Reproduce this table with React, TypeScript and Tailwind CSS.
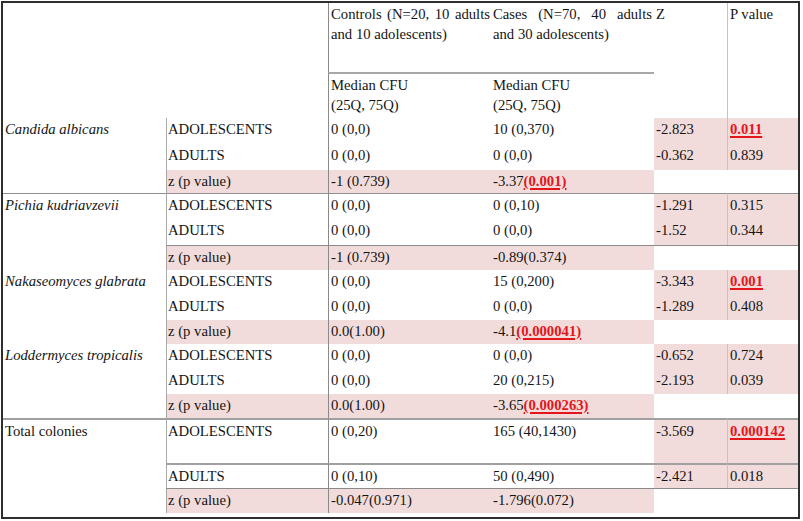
import React from "react";

// Table of yeast colony counts: controls vs cases, by age group

function Cell({ className = "", children }: { className?: string; children?: React.ReactNode }) {
  return <div className={"pt-[1px] " + className}>{children}</div>;
}

function Sig({ children }: { children: React.ReactNode }) {
  return (
    <span className="font-bold text-[#e3161b] underline decoration-[1.5px] underline-offset-[2px]">
      {children}
    </span>
  );
}

export default function App() {
  return (
    <div className="bg-white w-[803px] h-[521px] pt-[1px] pl-[1px]">
      <div className="w-[799px] h-[518px] border-2 border-[#2e2e2e] font-['Liberation_Serif',serif] text-[14.7px] leading-[20px] text-[#141414]">
        <div className="grid grid-cols-[163px_162px_162px_164px_73px_71px] grid-rows-[69px_46px_26px_26px_23px_26px_26px_25px_25px_25px_24px_25px_25px_24px_45px_25px_25px]">
          {/* header */}
          <Cell className="col-span-2 row-span-2" />
          <Cell className="border-l border-[#8a8a8a] pl-[2px] text-justify">
            Controls (N=20, 10 adults and 10 adolescents)
          </Cell>
          <Cell className="pl-[3px] pr-[2px] text-justify">Cases (N=70, 40 adults and 30 adolescents)</Cell>
          <Cell className="row-span-2 pl-[2px]">Z</Cell>
          <Cell className="row-span-2 border-l border-[#c4c4c4] pl-[2px]">P value</Cell>
          <Cell className="border-l border-[#8a8a8a] border-t-2 border-t-[#a8a8a8] pl-[2px] pt-[0px]">
            Median CFU
            <br />
            (25Q, 75Q)
          </Cell>
          <Cell className="border-t-2 border-t-[#a8a8a8] pl-[3px] pt-[0px]">
            Median CFU
            <br />
            (25Q, 75Q)
          </Cell>

          {/* Candida albicans */}
          <Cell className="row-span-3 pl-[2px] italic">Candida albicans</Cell>
          <Cell className="border-l border-[#a8a8a8] pl-[1px]">ADOLESCENTS</Cell>
          <Cell className="border-l border-[#8a8a8a] pl-[2px]">0 (0,0)</Cell>
          <Cell className="pl-[3px]">10 (0,370)</Cell>
          <Cell className="bg-[#f2dcdb] pl-[2px]">-2.823</Cell>
          <Cell className="bg-[#f2dcdb] border-l border-[#c4c4c4] pl-[2px]">
            <Sig>0.011</Sig>
          </Cell>
          <Cell className="border-l border-[#a8a8a8] pl-[1px]">ADULTS</Cell>
          <Cell className="border-l border-[#8a8a8a] pl-[2px]">0 (0,0)</Cell>
          <Cell className="pl-[3px]">0 (0,0)</Cell>
          <Cell className="bg-[#f2dcdb] pl-[2px]">-0.362</Cell>
          <Cell className="bg-[#f2dcdb] border-l border-[#c4c4c4] pl-[2px]">0.839</Cell>
          <Cell className="bg-[#f2dcdb] border-l border-[#a8a8a8] pl-[1px]">z (p value)</Cell>
          <Cell className="bg-[#f2dcdb] border-l border-[#8a8a8a] pl-[2px]">-1 (0.739)</Cell>
          <Cell className="bg-[#f2dcdb] pl-[3px]">
            -3.37<Sig>(0.001)</Sig>
          </Cell>
          <Cell className="col-span-2" />

          {/* Pichia kudriavzevii */}
          <Cell className="row-span-3 border-t border-t-[#909090] pl-[2px] pt-[0px] italic">Pichia kudriavzevii</Cell>
          <Cell className="border-t border-t-[#909090] border-l border-[#a8a8a8] pl-[1px] pt-[0px]">ADOLESCENTS</Cell>
          <Cell className="border-t border-t-[#909090] border-l border-[#8a8a8a] pl-[2px] pt-[0px]">0 (0,0)</Cell>
          <Cell className="border-t border-t-[#909090] pl-[3px] pt-[0px]">0 (0,10)</Cell>
          <Cell className="border-t border-t-[#909090] bg-[#f2dcdb] pl-[2px] pt-[0px]">-1.291</Cell>
          <Cell className="border-t border-t-[#909090] bg-[#f2dcdb] border-l border-[#c4c4c4] pl-[2px] pt-[0px]">0.315</Cell>
          <Cell className="border-l border-[#a8a8a8] pl-[1px]">ADULTS</Cell>
          <Cell className="border-l border-[#8a8a8a] pl-[2px]">0 (0,0)</Cell>
          <Cell className="pl-[3px]">0 (0,0)</Cell>
          <Cell className="bg-[#f2dcdb] pl-[2px]">-1.52</Cell>
          <Cell className="bg-[#f2dcdb] border-l border-[#c4c4c4] pl-[2px]">0.344</Cell>
          <Cell className="border-t border-t-[#8a8a8a] bg-[#f2dcdb] border-l border-[#a8a8a8] pl-[1px] pt-[0px]">z (p value)</Cell>
          <Cell className="border-t border-t-[#8a8a8a] bg-[#f2dcdb] border-l border-[#8a8a8a] pl-[2px] pt-[0px]">-1 (0.739)</Cell>
          <Cell className="border-t border-t-[#8a8a8a] bg-[#f2dcdb] pl-[3px] pt-[0px]">-0.89(0.374)</Cell>
          <Cell className="col-span-2 border-t border-t-[#8a8a8a]" />

          {/* Nakaseomyces glabrata */}
          <Cell className="row-span-3 pl-[2px] italic">Nakaseomyces glabrata</Cell>
          <Cell className="border-l border-[#a8a8a8] pl-[1px]">ADOLESCENTS</Cell>
          <Cell className="border-l border-[#8a8a8a] pl-[2px]">0 (0,0)</Cell>
          <Cell className="pl-[3px]">15 (0,200)</Cell>
          <Cell className="bg-[#f2dcdb] pl-[2px]">-3.343</Cell>
          <Cell className="bg-[#f2dcdb] border-l border-[#c4c4c4] pl-[2px]">
            <Sig>0.001</Sig>
          </Cell>
          <Cell className="border-l border-[#a8a8a8] pl-[1px]">ADULTS</Cell>
          <Cell className="border-l border-[#8a8a8a] pl-[2px]">0 (0,0)</Cell>
          <Cell className="pl-[3px]">0 (0,0)</Cell>
          <Cell className="bg-[#f2dcdb] pl-[2px]">-1.289</Cell>
          <Cell className="bg-[#f2dcdb] border-l border-[#c4c4c4] pl-[2px]">0.408</Cell>
          <Cell className="bg-[#f2dcdb] border-l border-[#a8a8a8] pl-[1px]">z (p value)</Cell>
          <Cell className="bg-[#f2dcdb] border-l border-[#8a8a8a] pl-[2px]">0.0(1.00)</Cell>
          <Cell className="bg-[#f2dcdb] pl-[3px]">
            -4.1<Sig>(0.000041)</Sig>
          </Cell>
          <Cell className="col-span-2" />

          {/* Loddermyces tropicalis */}
          <Cell className="row-span-3 pl-[2px] italic">Loddermyces tropicalis</Cell>
          <Cell className="border-l border-[#a8a8a8] pl-[1px]">ADOLESCENTS</Cell>
          <Cell className="border-l border-[#8a8a8a] pl-[2px]">0 (0,0)</Cell>
          <Cell className="pl-[3px]">0 (0,0)</Cell>
          <Cell className="bg-[#f2dcdb] pl-[2px]">-0.652</Cell>
          <Cell className="bg-[#f2dcdb] border-l border-[#c4c4c4] pl-[2px]">0.724</Cell>
          <Cell className="border-l border-[#a8a8a8] pl-[1px]">ADULTS</Cell>
          <Cell className="border-l border-[#8a8a8a] pl-[2px]">0 (0,0)</Cell>
          <Cell className="pl-[3px]">20 (0,215)</Cell>
          <Cell className="bg-[#f2dcdb] pl-[2px]">-2.193</Cell>
          <Cell className="bg-[#f2dcdb] border-l border-[#c4c4c4] pl-[2px]">0.039</Cell>
          <Cell className="bg-[#f2dcdb] border-l border-[#a8a8a8] pl-[1px]">z (p value)</Cell>
          <Cell className="bg-[#f2dcdb] border-l border-[#8a8a8a] pl-[2px]">0.0(1.00)</Cell>
          <Cell className="bg-[#f2dcdb] pl-[3px]">
            -3.65<Sig>(0.000263)</Sig>
          </Cell>
          <Cell className="col-span-2" />

          {/* Total colonies */}
          <Cell className="row-span-3 border-t-2 border-t-[#a0a0a0] pl-[2px] pt-[0px]">Total colonies</Cell>
          <Cell className="border-t-2 border-t-[#a0a0a0] border-l border-[#a8a8a8] pl-[1px] pt-[0px]">ADOLESCENTS</Cell>
          <Cell className="border-t-2 border-t-[#a0a0a0] border-l border-[#8a8a8a] pl-[2px] pt-[0px]">0 (0,20)</Cell>
          <Cell className="border-t-2 border-t-[#a0a0a0] pl-[3px] pt-[0px]">165 (40,1430)</Cell>
          <Cell className="border-t-2 border-t-[#a0a0a0] bg-[#f2dcdb] pl-[2px] pt-[0px]">-3.569</Cell>
          <Cell className="border-t-2 border-t-[#a0a0a0] bg-[#f2dcdb] border-l border-[#c4c4c4] pl-[2px] pt-[0px]">
            <Sig>0.000142</Sig>
          </Cell>
          <Cell className="border-t-2 border-t-[#a0a0a0] border-l border-[#a8a8a8] pl-[1px] pt-[0px]">ADULTS</Cell>
          <Cell className="border-t-2 border-t-[#a0a0a0] border-l border-[#8a8a8a] pl-[2px] pt-[0px]">0 (0,10)</Cell>
          <Cell className="border-t-2 border-t-[#a0a0a0] pl-[3px] pt-[0px]">50 (0,490)</Cell>
          <Cell className="border-t-2 border-t-[#a0a0a0] bg-[#f2dcdb] pl-[2px] pt-[0px]">-2.421</Cell>
          <Cell className="border-t-2 border-t-[#a0a0a0] bg-[#f2dcdb] border-l border-[#c4c4c4] pl-[2px] pt-[0px]">0.018</Cell>
          <Cell className="border-t border-t-[#8a8a8a] bg-[#f2dcdb] border-l border-[#a8a8a8] pl-[1px] pt-[0px]">z (p value)</Cell>
          <Cell className="border-t border-t-[#8a8a8a] bg-[#f2dcdb] border-l border-[#8a8a8a] pl-[2px] pt-[0px]">-0.047(0.971)</Cell>
          <Cell className="border-t border-t-[#8a8a8a] bg-[#f2dcdb] pl-[3px] pt-[0px]">-1.796(0.072)</Cell>
          <Cell className="col-span-2 border-t border-t-[#8a8a8a]" />
        </div>
      </div>
    </div>
  );
}
